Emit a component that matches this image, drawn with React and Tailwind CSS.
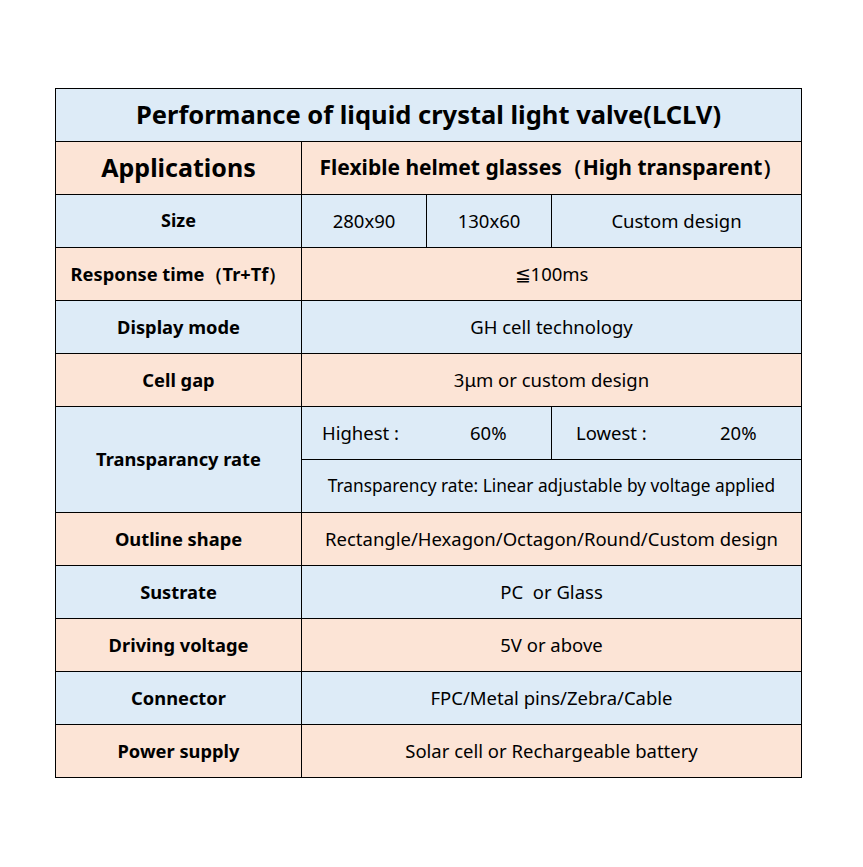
const blue = 'bg-[#ddebf7]';
const peach = 'bg-[#fce4d6]';

function Cell({ className = '', children }) {
  return (
    <div className={`flex items-center justify-center text-center ${className}`}>
      {children}
    </div>
  );
}

export default function App() {
  const rows = [
    { label: 'Response time（Tr+Tf）', value: '≦100ms', bg: peach },
    { label: 'Display mode', value: 'GH cell technology', bg: blue },
    { label: 'Cell gap', value: '3μm or custom design', bg: peach },
  ];
  const lower = [
    { label: 'Outline shape', value: 'Rectangle/Hexagon/Octagon/Round/Custom design', bg: peach },
    { label: 'Sustrate', value: 'PC  or Glass', bg: blue },
    { label: 'Driving voltage', value: '5V or above', bg: peach },
    { label: 'Connector', value: 'FPC/Metal pins/Zebra/Cable', bg: blue },
    { label: 'Power supply', value: 'Solar cell or Rechargeable battery', bg: peach },
  ];

  return (
    <div className="min-h-screen bg-white pt-[88px] pl-[55px] text-black [font-family:'Noto_Sans',sans-serif]">
      <div className="grid w-[747px] grid-cols-[245px_124px_124px_249px] grid-rows-[repeat(13,52px)] gap-px bg-black p-px whitespace-pre">
        {/* title */}
        <Cell className={`col-span-4 ${blue} pb-px text-[25.5px] font-bold`}>
          Performance of liquid crystal light valve(LCLV)
        </Cell>

        <Cell className={`${peach} pb-px text-[25px] font-bold`}>Applications</Cell>
        <Cell className={`col-span-3 ${peach} pb-px text-[21px] font-bold`}>
          Flexible helmet glasses（High transparent）
        </Cell>

        <Cell className={`${blue} pb-px text-[18px] font-bold`}>Size</Cell>
        <Cell className={`${blue} pb-px text-[18.5px]`}>280x90</Cell>
        <Cell className={`${blue} pb-px text-[18.5px]`}>130x60</Cell>
        <Cell className={`${blue} pb-px text-[18.5px]`}>Custom design</Cell>

        {rows.map((r) => (
          <>
            <Cell key={r.label} className={`${r.bg} pb-px text-[18.3px] font-bold`}>{r.label}</Cell>
            <Cell key={r.value} className={`col-span-3 ${r.bg} pb-px text-[18.5px]`}>{r.value}</Cell>
          </>
        ))}

        {/* transparency, two sub rows */}
        <Cell className={`row-span-2 ${blue} pb-px text-[18.3px] font-bold`}>Transparancy rate</Cell>
        <div className={`col-span-2 flex items-center ${blue} pb-px pl-[20px] text-[18.5px]`}>
          <span className="w-[148px]">Highest :</span>
          <span>60%</span>
        </div>
        <div className={`flex items-center ${blue} pb-px pl-[24px] text-[18.5px]`}>
          <span className="w-[144px]">Lowest :</span>
          <span>20%</span>
        </div>
        <Cell className={`col-span-3 ${blue} pb-px text-[17.3px]`}>
          Transparency rate: Linear adjustable by voltage applied
        </Cell>

        {lower.map((r) => (
          <>
            <Cell key={r.label} className={`${r.bg} pb-px text-[18.3px] font-bold`}>{r.label}</Cell>
            <Cell key={r.value} className={`col-span-3 ${r.bg} pb-px text-[18.5px]`}>{r.value}</Cell>
          </>
        ))}
      </div>
    </div>
  );
}
